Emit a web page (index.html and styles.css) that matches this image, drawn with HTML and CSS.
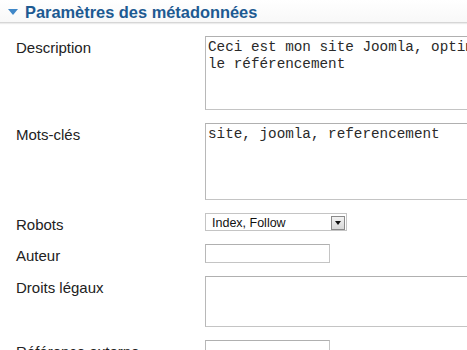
FILE: index.html
```html
<!DOCTYPE html>
<html lang="fr">

<head>
    <meta charset="UTF-8">
    <meta name="viewport" content="width=device-width, initial-scale=1.0">
    <title>Paramètres des métadonnées</title>
    <link rel="stylesheet" href="styles.css">
</head>

<body>
    <!-- Panel header -->
    <div class="panel-head">
        <span class="toggle"></span>
        <h3>Paramètres des métadonnées</h3>
    </div>

    <!-- Metadata form -->
    <div class="form">
        <label class="label" for="metadesc">Description</label>
        <textarea id="metadesc" class="area area-desc">Ceci est mon site Joomla, optimisé pour le référencement</textarea>

        <label class="label" for="metakey">Mots-clés</label>
        <textarea id="metakey" class="area area-keys">site, joomla, referencement</textarea>

        <label class="label">Robots</label>
        <div class="select">
            <span class="select-value">Index, Follow</span>
            <span class="select-arrow"></span>
        </div>

        <label class="label" for="author">Auteur</label>
        <input type="text" id="author" class="text">

        <label class="label" for="rights">Droits légaux</label>
        <textarea id="rights" class="area area-rights"></textarea>

        <label class="label" for="xref">Référence externe</label>
        <input type="text" id="xref" class="text">
    </div>
</body>

</html>
```

FILE: styles.css
```css
/* Base styles */
body {
    font-family: "Liberation Sans", Arial, sans-serif;
    background-color: #fff;
    color: #222;
    margin: 0;
    padding: 0;
    overflow: hidden;
}

/* Panel header */
.panel-head {
    display: flex;
    align-items: center;
    height: 22px;
    padding-left: 8px;
    border-bottom: 1px solid #d6d6d6;
    box-shadow: 0 1px 1px #ececec;
    background: linear-gradient(#fff, #f8f8f8);
}

.toggle {
    width: 0;
    height: 0;
    border-left: 5px solid transparent;
    border-right: 5px solid transparent;
    border-top: 6px solid #3f87c8;
    margin-right: 7px;
    margin-top: 2px;
}

.panel-head h3 {
    margin: 0;
    padding-top: 2px;
    font-size: 16.4px;
    font-weight: bold;
    color: #1d5a92;
}

/* Form grid */
.form {
    display: grid;
    grid-template-columns: 189px 380px;
    row-gap: 13px;
    padding: 13px 0 0 16px;
}

.label {
    font-size: 15px;
    line-height: 12px;
    padding-top: 6px;
    color: #222;
}

/* Fields */
.area,
.text {
    box-sizing: border-box;
    border: 1px solid #c4c4c4;
    border-top-color: #b0b0b0;
    border-left-color: #b8b8b8;
    background-color: #fff;
    margin: 0;
}

.area {
    width: 360px;
    padding: 2px 2px;
    font-family: "Liberation Mono", "Courier New", monospace;
    font-size: 14.3px;
    line-height: 17px;
    color: #2a2a2a;
    resize: none;
    overflow: hidden;
}

.area-desc {
    height: 74px;
}

.area-keys {
    height: 77px;
}

.area-rights {
    height: 51px;
}

.text {
    width: 125px;
    height: 19px;
}

/* Select box */
.select {
    display: flex;
    align-items: center;
    box-sizing: border-box;
    width: 142px;
    height: 18px;
    border: 1px solid #c4c4c4;
    padding: 1px 1px 0 6px;
}

.select-value {
    flex: 1;
    font-size: 12.5px;
    color: #111;
}

.select-arrow {
    position: relative;
    box-sizing: border-box;
    width: 14px;
    height: 14px;
    border: 1px solid #8a8a8a;
    background: linear-gradient(#f2f2f2, #d8d8d8);
}

.select-arrow::after {
    content: "";
    position: absolute;
    left: 3px;
    top: 4px;
    border-left: 3px solid transparent;
    border-right: 3px solid transparent;
    border-top: 4px solid #111;
}
```
